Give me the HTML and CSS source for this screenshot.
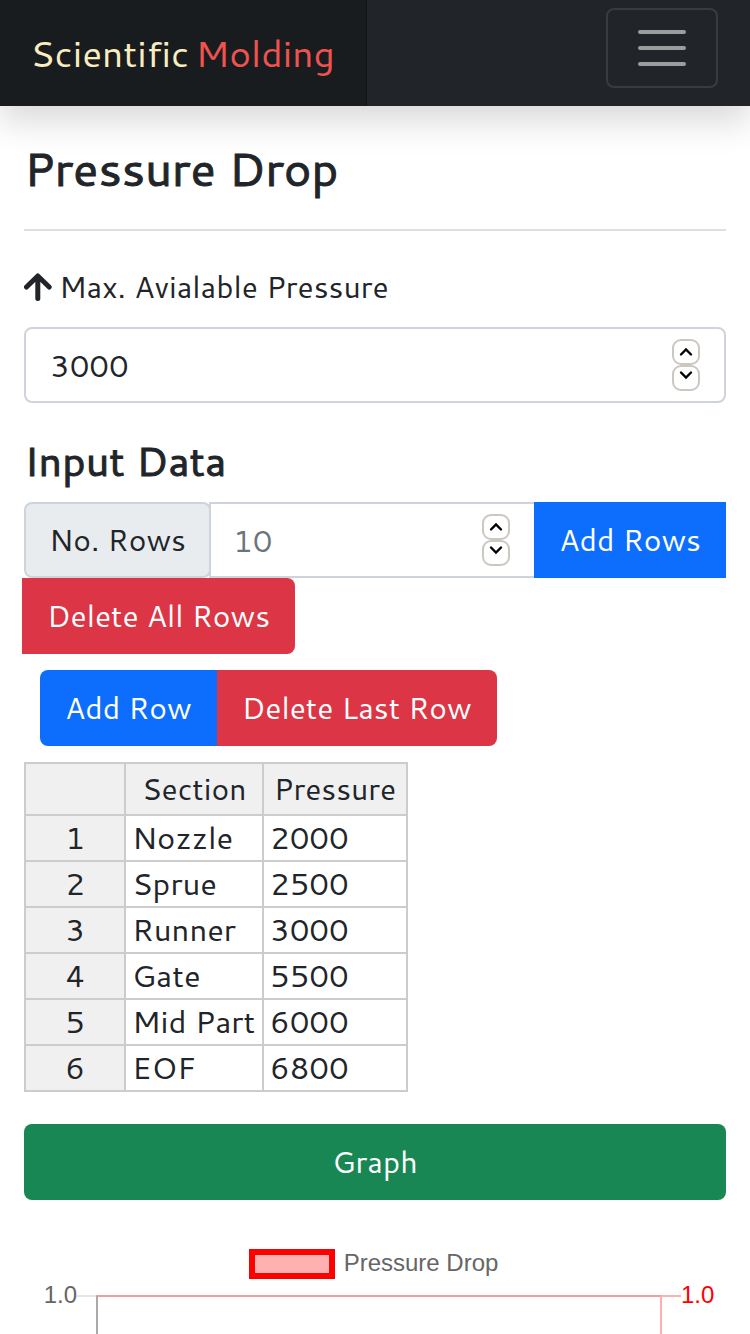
FILE: index.html
```html
<!DOCTYPE html>
<html lang="en">
<head>
<meta charset="utf-8">
<meta name="viewport" content="width=device-width, initial-scale=1">
<title>Scientific Molding</title>
<link rel="stylesheet" href="styles.css">
</head>
<body>
<header class="navbar">
  <a class="brand" href="#"><span class="brand-first">Scientific</span> <span class="brand-second">Molding</span></a>
  <div class="nav-side">
    <button class="toggler" type="button" aria-label="Toggle navigation">
      <svg viewBox="0 0 60 60" width="60" height="60" fill="none" stroke="currentColor" stroke-width="4" stroke-linecap="round"><path d="M8 14h44M8 30h44M8 46h44"/></svg>
    </button>
  </div>
</header>
<main class="content">
  <h1 class="title">Pressure Drop</h1>
  <label class="field-label" for="max">
    <svg class="arrow" viewBox="0 0 28 32" width="28" height="32" fill="none" stroke="currentColor" stroke-width="5" stroke-linecap="round" stroke-linejoin="round"><path d="M2.500 16 13.800 5 25.200 16M13.800 6v21.500"/></svg>
    Max. Avialable Pressure
  </label>
  <div class="number-box">
    <input class="number" id="max" type="number" value="3000">
    <span class="spinner">
      <button class="step" type="button" aria-label="Increase pressure"><svg viewBox="0 0 24 22" width="24" height="22"><path d="M7 13.500l5-5 5 5"/></svg></button>
      <button class="step" type="button" aria-label="Decrease pressure"><svg viewBox="0 0 24 22" width="24" height="22"><path d="M7 5.500l5 5 5-5"/></svg></button>
    </span>
  </div>
  <h2 class="subtitle">Input Data</h2>
  <div class="group">
    <label class="addon" for="rows">No. Rows</label>
    <div class="number-box grow">
      <input class="number" id="rows" type="number" placeholder="10">
      <span class="spinner">
        <button class="step" type="button" aria-label="More rows"><svg viewBox="0 0 24 22" width="24" height="22"><path d="M7 13.500l5-5 5 5"/></svg></button>
        <button class="step" type="button" aria-label="Fewer rows"><svg viewBox="0 0 24 22" width="24" height="22"><path d="M7 5.500l5 5 5-5"/></svg></button>
      </span>
    </div>
    <button class="btn blue" type="button">Add Rows</button>
    <button class="btn red wrapped" type="button">Delete All Rows</button>
  </div>
  <div class="row-actions">
    <button class="btn blue first" type="button">Add Row</button>
    <button class="btn red last" type="button">Delete Last Row</button>
  </div>
  <table class="sheet">
    <thead><tr><th class="index"></th><th class="section">Section</th><th class="pressure">Pressure</th></tr></thead>
    <tbody>
      <tr><th>1</th><td>Nozzle</td><td>2000</td></tr>
      <tr><th>2</th><td>Sprue</td><td>2500</td></tr>
      <tr><th>3</th><td>Runner</td><td>3000</td></tr>
      <tr><th>4</th><td>Gate</td><td>5500</td></tr>
      <tr><th>5</th><td>Mid Part</td><td>6000</td></tr>
      <tr><th>6</th><td>EOF</td><td>6800</td></tr>
    </tbody>
  </table>
  <button class="btn green" type="button">Graph</button>
  <section class="chart" aria-label="Pressure Drop chart">
    <div class="legend"><span class="swatch"></span>Pressure Drop</div>
    <div class="plot">
      <span class="tick left-tick">1.0</span>
      <span class="mark grey-mark"></span>
      <div class="area"></div>
      <span class="mark red-mark"></span>
      <span class="tick right-tick">1.0</span>
    </div>
  </section>
</main>
</body>
</html>
```
FILE: styles.css
```css
* { box-sizing: border-box; }
body { margin: 0; background: #fff; color: #212529; font: 30px/48px Cantarell, system-ui, "Noto Sans", sans-serif; }
button, input { font: inherit; color: inherit; margin: 0; }
.navbar { display: flex; height: 106px; background: #212529; box-shadow: 0 16px 32px rgba(0,0,0,.15); }
.brand { display: flex; align-items: center; gap: 6px; width: 367px; padding: 0 30px; background: #191c1f; box-shadow: inset -1px 0 0 #121416; font-size: 37px; text-decoration: none; white-space: nowrap; }
.brand-first { color: #f9ecc0; }
.brand-second { color: #ef5350; }
.nav-side { display: flex; flex: 1; justify-content: flex-end; padding: 8px 32px 0 0; }
.toggler { display: grid; place-items: center; width: 112px; height: 80px; padding: 0; background: none; border: 2px solid #383b3f; border-radius: 8px; color: #9b9d9f; }
.content { padding: 32px 24px 0; }
.title { margin: 0; padding-bottom: 31px; border-bottom: 2px solid #dedfe0; font-size: 47px; line-height: 60px; font-weight: 500; -webkit-text-stroke: 1px currentColor; }
.field-label { display: flex; align-items: center; gap: 7px; margin: 32px 0 16px; }
.number-box { display: flex; align-items: center; height: 76px; padding: 0 24px; border: 2px solid #ced4da; border-radius: 8px; }
.number { flex: 1; min-width: 0; width: 0; padding: 0; border: 0; background: none; outline: 0; appearance: textfield; }
.number::-webkit-inner-spin-button { display: none; }
.number::placeholder { color: #6c757d; opacity: 1; }
.spinner { display: flex; flex-direction: column; }
.step { display: grid; place-items: center; width: 28px; height: 26px; padding: 0; border: 2px solid #cdc7c2; border-radius: 9px; background: #fff; }
.step path { fill: none; stroke: #000; stroke-width: 2.4; stroke-linecap: round; }
.subtitle { margin: 32px 0 16px; font-size: 41px; line-height: 51px; font-weight: 500; -webkit-text-stroke: 1px currentColor; }
.group { display: flex; flex-wrap: wrap; }
.addon { height: 76px; padding: 12px 23px; background: #e9ecef; border: 2px solid #ced4da; border-radius: 8px; }
.grow { flex: 1; border-radius: 0; margin-left: -2px; border-right: 0; padding-left: 22px; }
.btn { height: 76px; padding: 0 25px; border: 0; color: #fff; white-space: nowrap; }
.blue { background: #0d6efd; }
.red { background: #dc3545; }
.wrapped { margin-left: -2px; border-radius: 0 8px 8px 0; }
.row-actions { display: flex; padding: 16px; }
.first { border-radius: 8px 0 0 8px; }
.last { border-radius: 0 8px 8px 0; }
.number, .sheet td, .sheet tbody th { font-size: 31px; }
.sheet { border-collapse: collapse; line-height: 42px; white-space: nowrap; }
.sheet th, .sheet td { height: 46px; padding: 0 6px 2px; border: 2px solid #ccc; font-weight: 400; }
.sheet th { background: #f0f0f0; text-align: center; }
.sheet thead th { height: 52px; padding-bottom: 0; }
.index { width: 100px; }
.section { width: 138px; }
.pressure { width: 144px; }
.green { display: block; width: 100%; margin-top: 32px; background: #198754; border-radius: 8px; }
.chart { margin-top: 49px; color: #666; font: 24px/30px "Liberation Sans", sans-serif; }
.legend { display: flex; justify-content: center; gap: 9px; line-height: 28px; padding-right: 3px; }
.swatch { width: 86px; height: 30px; background: #ffb1b1; border: 6px solid #f00; }
.plot { display: flex; margin-top: 1px; }
.left-tick { width: 53px; text-align: right; }
.mark { width: 19px; height: 2px; margin-top: 15px; }
.grey-mark { background: #e5e5e5; }
.red-mark { background: #ffb1b1; }
.area { flex: 1; height: 39px; margin-top: 15px; border-top: 2px solid #ef9d9d; border-left: 2px solid #aaa; border-right: 2px solid #ffb1b1; }
.right-tick { width: 45px; color: #f00; }
```
